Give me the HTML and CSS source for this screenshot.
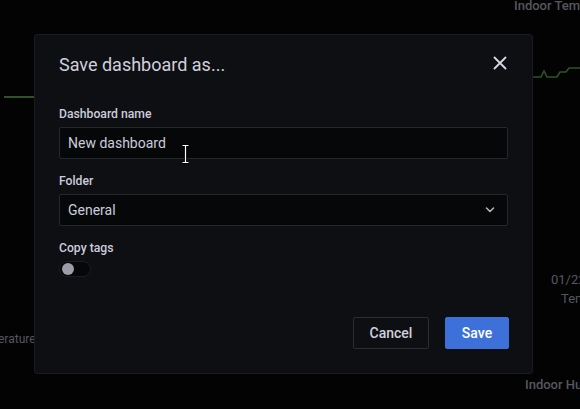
FILE: index.html
```html
<!DOCTYPE html>
<html lang="en">
<head>
<meta charset="utf-8">
<title>Save dashboard as</title>
<link rel="stylesheet" href="styles.css">
</head>
<body>
<div class="dashboard">
  <span class="bg-text t1">Indoor Tem</span>
  <span class="bg-text t2">01/22</span>
  <span class="bg-text t3">Tem</span>
  <span class="bg-text t4">erature</span>
  <span class="bg-text t5">Indoor Hu</span>
  <svg class="graph g-left" width="30" height="4" viewBox="0 0 30 4"><path d="M0 2 H30" stroke="#2f5228" stroke-width="2" fill="none"/></svg>
  <svg class="graph g-right" width="47" height="14" viewBox="0 0 47 14"><path d="M0 11 H8 L11 5 L14 11 H24 L27 6 H33 L36 2 H47" stroke="#2f5228" stroke-width="1.6" fill="none"/></svg>
</div>

<div class="modal">
  <div class="modal-header">
    <h2 class="modal-title">Save dashboard as...</h2>
    <button class="close" aria-label="Close">
      <svg width="14" height="14" viewBox="0 0 14 14"><path d="M1.5 1.5 L12.5 12.5 M12.5 1.5 L1.5 12.5" stroke="#d8d8e2" stroke-width="1.8" stroke-linecap="round"/></svg>
    </button>
  </div>
  <div class="modal-body">
    <div class="field">
      <label class="label">Dashboard name</label>
      <div class="input">New dashboard</div>
    </div>
    <div class="field">
      <label class="label">Folder</label>
      <div class="input select">
        <span>General</span>
        <svg width="10" height="6" viewBox="0 0 10 6"><path d="M1.5 1 L5 4.5 L8.5 1" stroke="#b8b8c4" stroke-width="1.5" fill="none" stroke-linecap="round"/></svg>
      </div>
    </div>
    <div class="field">
      <label class="label">Copy tags</label>
      <div class="switch"><span class="knob"></span></div>
    </div>
    <div class="actions">
      <button class="btn btn-secondary">Cancel</button>
      <button class="btn btn-primary">Save</button>
    </div>
  </div>
  <svg class="cursor" width="9" height="20" viewBox="0 0 9 20"><path d="M1 1 H8 M4.5 1 V19 M1 19 H8" stroke="#000" stroke-width="3" fill="none"/><path d="M1.5 1.5 H7.5 M4.5 1.5 V18.5 M1.5 18.5 H7.5" stroke="#fff" stroke-width="1.2" fill="none"/></svg>
</div>
</body>
</html>
```

FILE: styles.css
```css
* { box-sizing: border-box; }
html, body {
  margin: 0;
  padding: 0;
  background: #030304;
  width: 580px;
  height: 409px;
  overflow: hidden;
  font-family: Roboto, "Liberation Sans", sans-serif;
  color: #ccccdc;
}
.dashboard {
  position: relative;
  width: 580px;
  height: 409px;
  overflow: hidden;
}
.bg-text {
  position: absolute;
  font-size: 13px;
  font-weight: 500;
  color: #56575d;
  white-space: nowrap;
}
.t1 { left: 514px; top: -2px; }
.t2 { left: 551px; top: 272px; font-weight: 400; }
.t3 { left: 561px; top: 291px; font-weight: 400; }
.t4 { left: -2px; top: 332px; font-size: 12px; font-weight: 400; }
.t5 { left: 525px; top: 377px; }
.graph { position: absolute; }
.g-left { left: 4px; top: 95px; }
.g-right { left: 533px; top: 66px; }

.modal {
  position: absolute;
  left: 34px;
  top: 34px;
  width: 499px;
  height: 340px;
  background: #0e0f13;
  border: 1px solid #1a1b20;
  border-radius: 3px;
  display: flex;
  flex-direction: column;
}
.modal-header {
  display: flex;
  align-items: center;
  justify-content: space-between;
  padding: 18px 24px 0 24px;
  height: 42px;
}
.modal-title {
  margin: 0;
  font-size: 18px;
  font-weight: 400;
  line-height: 24px;
  color: #d0d0dc;
}
.close {
  background: none;
  border: 0;
  padding: 0;
  width: 14px;
  height: 14px;
  margin-top: -4px;
  margin-right: 1px;
  display: flex;
}
.modal-body {
  padding: 28px 23px 0 24px;
  display: flex;
  flex-direction: column;
  flex: 1;
}
.field {
  display: flex;
  flex-direction: column;
  margin-bottom: 13px;
}
.label {
  font-size: 12.2px;
  font-weight: 500;
  line-height: 18px;
  margin-bottom: 4px;
  color: #ccccdc;
}
.input {
  height: 32px;
  width: 449px;
  background: #060709;
  border: 1px solid #26272c;
  border-radius: 2px;
  padding: 0 8px;
  font-size: 14px;
  line-height: 30px;
  color: #ccccdc;
}
.select {
  display: flex;
  align-items: center;
  justify-content: space-between;
  padding-right: 12px;
}
.switch {
  width: 32px;
  height: 16px;
  border-radius: 8px;
  background: #060709;
  border: 1px solid #1c1d22;
  display: flex;
  align-items: center;
  padding-left: 2px;
}
.knob {
  width: 12px;
  height: 12px;
  border-radius: 50%;
  background: #9d9da8;
}
.actions {
  display: flex;
  justify-content: flex-end;
  gap: 16px;
  margin-top: 27px;
}
.btn {
  height: 32px;
  font-family: Roboto, "Liberation Sans", sans-serif;
  font-size: 14px;
  font-weight: 500;
  border-radius: 2px;
  padding: 0 15px;
  line-height: 30px;
}
.btn-secondary {
  background: transparent;
  border: 1px solid #2c2d33;
  color: #d0d0dc;
  width: 76px;
}
.btn-primary {
  background: #3d71d9;
  border: 1px solid #3d71d9;
  color: #ffffff;
  width: 64px;
}
.cursor {
  position: absolute;
  left: 146px;
  top: 109px;
}
```
